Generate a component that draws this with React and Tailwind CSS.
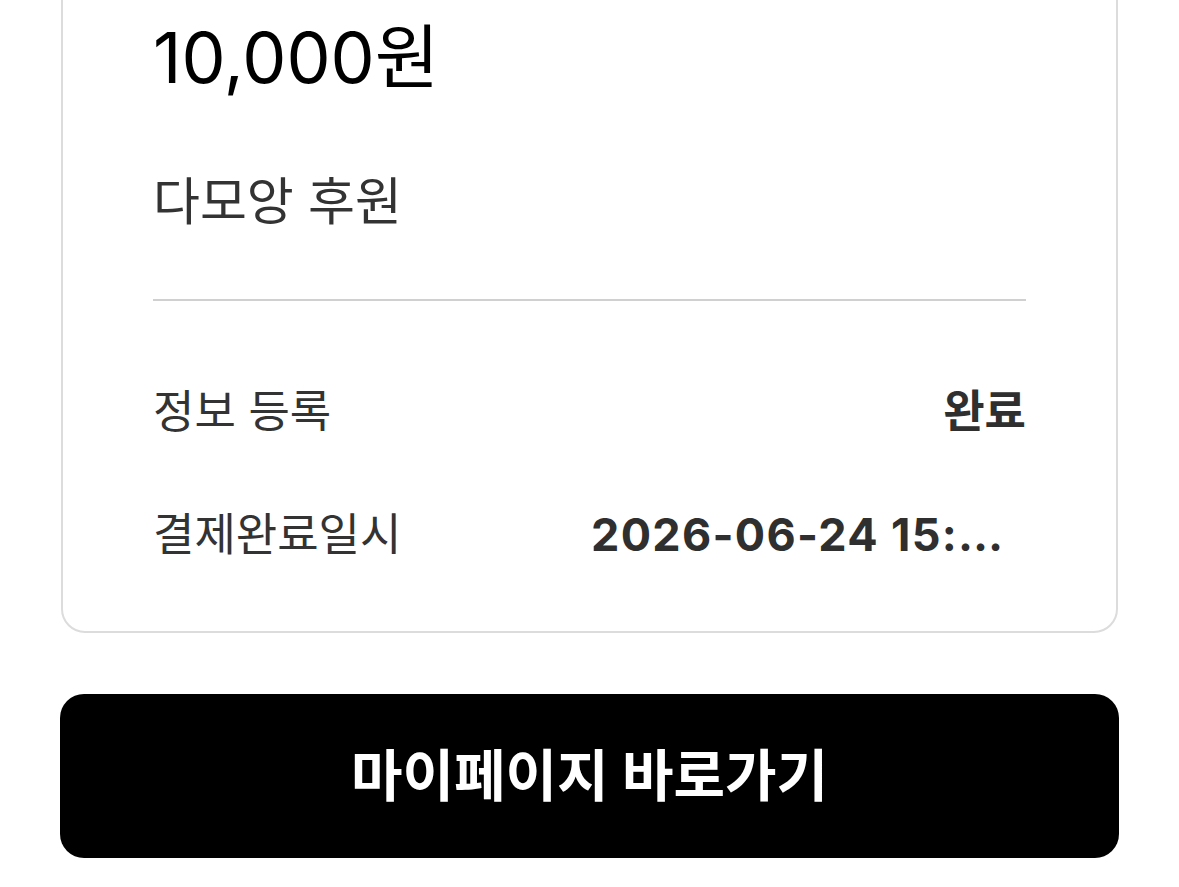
import React from 'react'

const FONT = { fontFamily: 'Inter, "Noto Sans CJK KR", "Noto Sans", sans-serif' }

function InfoRow({ label, value, valueClass = '' }) {
  return (
    <div className="flex h-[100px] items-center justify-between">
      <span className="text-[45px] text-[#333333]">{label}</span>
      <span className={`text-[45px] font-bold text-[#2f2f2f] ${valueClass}`}>{value}</span>
    </div>
  )
}

export default function App() {
  return (
    <div className="min-h-screen overflow-hidden bg-white" style={FONT}>
      {/* receipt card, top scrolled away */}
      <div className="mx-[61px] -mt-[40px] rounded-[24px] border-2 border-[#dcdcdc] px-[90px] pt-[40px] pb-[46px]">
        <div className="flex h-[110px] items-center text-[70px] text-black">10,000원</div>
        <div className="mt-[45px] flex h-[90px] items-center text-[51px] text-[#333333]">다모앙 후원</div>
        <div className="mt-[52px] h-[2px] bg-[#d0d0d0]" />
        <div className="mt-[61px]">
          <InfoRow label="정보 등록" value="완료" />
        </div>
        <div className="mt-[23px]">
          <InfoRow
            label="결제완료일시"
            value="2026-06-24 15:30:12"
            valueClass="mr-[19px] w-[416px] truncate tracking-[1.3px]"
          />
        </div>
      </div>

      <button className="mx-[60px] mt-[61px] flex h-[164px] w-[1059px] items-center justify-center rounded-[24px] bg-black text-[56px] font-bold text-white">
        마이페이지 바로가기
      </button>
    </div>
  )
}
